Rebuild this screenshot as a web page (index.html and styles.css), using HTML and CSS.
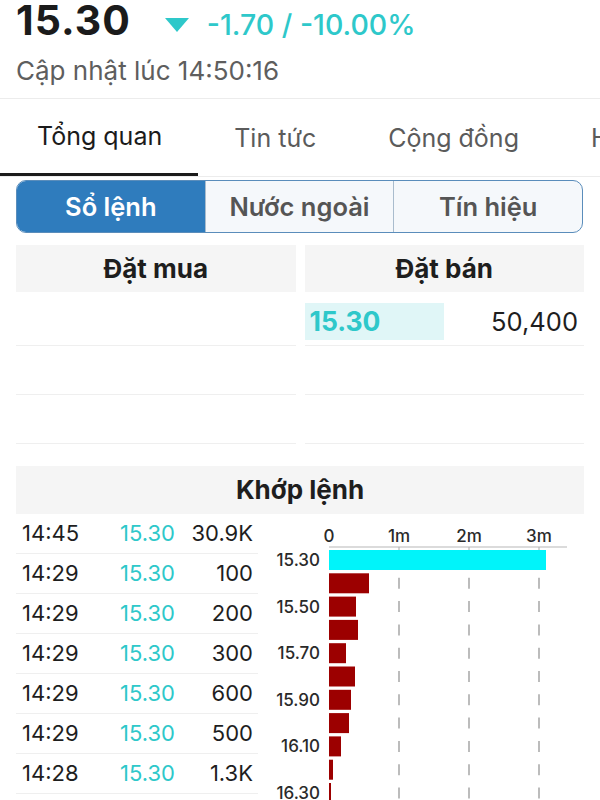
FILE: index.html
```html
<!DOCTYPE html>
<html lang="vi">
<head>
  <meta charset="UTF-8" />
  <title>Sổ lệnh</title>
  <link rel="stylesheet" href="styles.css">
</head>
<body>
  <div class="quote">
    <div class="quote-top">
      <span class="price">15.30</span>
      <span class="arrow"></span>
      <span class="change">-1.70 / -10.00%</span>
    </div>
    <div class="updated">Cập nhật lúc 14:50:16</div>
  </div>

  <nav class="tabs">
    <a class="tab active">Tổng quan</a>
    <a class="tab">Tin tức</a>
    <a class="tab">Cộng đồng</a>
    <a class="tab">Hồ sơ</a>
  </nav>

  <div class="segments">
    <div class="seg active">Sổ lệnh</div>
    <div class="seg">Nước ngoài</div>
    <div class="seg">Tín hiệu</div>
  </div>

  <div class="book">
    <div class="book-col">
      <div class="book-head">Đặt mua</div>
      <div class="book-row"></div>
      <div class="book-row"></div>
      <div class="book-row"></div>
    </div>
    <div class="book-col">
      <div class="book-head">Đặt bán</div>
      <div class="book-row">
        <span class="book-price">15.30</span>
        <span class="book-vol">50,400</span>
      </div>
      <div class="book-row"></div>
      <div class="book-row"></div>
    </div>
  </div>

  <div class="match">
    <div class="match-head">Khớp lệnh</div>
    <div class="match-body">
      <div class="trades">
        <div class="trade"><span>14:45</span><span class="t-price">15.30</span><span class="t-vol">30.9K</span></div>
        <div class="trade"><span>14:29</span><span class="t-price">15.30</span><span class="t-vol">100</span></div>
        <div class="trade"><span>14:29</span><span class="t-price">15.30</span><span class="t-vol">200</span></div>
        <div class="trade"><span>14:29</span><span class="t-price">15.30</span><span class="t-vol">300</span></div>
        <div class="trade"><span>14:29</span><span class="t-price">15.30</span><span class="t-vol">600</span></div>
        <div class="trade"><span>14:29</span><span class="t-price">15.30</span><span class="t-vol">500</span></div>
        <div class="trade"><span>14:28</span><span class="t-price">15.30</span><span class="t-vol">1.3K</span></div>
      </div>
      <svg class="chart" width="340" height="286" viewBox="0 0 340 286">
        <g class="axis-labels">
          <text x="69" y="28">0</text>
          <text x="139" y="28">1m</text>
          <text x="209" y="28">2m</text>
          <text x="279" y="28">3m</text>
        </g>
        <line x1="69" y1="33" x2="307" y2="33" stroke="#b8b8b8" stroke-width="1.2"/>
        <g stroke="#b8b8b8" stroke-width="1.2">
          <line x1="139" y1="33" x2="139" y2="37"/>
          <line x1="209" y1="33" x2="209" y2="37"/>
          <line x1="279" y1="33" x2="279" y2="37"/>
        </g>
        <g stroke="#999" stroke-width="1.3" stroke-dasharray="11 12.3">
          <line x1="139" y1="63.8" x2="139" y2="286"/>
          <line x1="209" y1="63.8" x2="209" y2="286"/>
          <line x1="279" y1="63.8" x2="279" y2="286"/>
        </g>
        <rect x="69" y="36" width="217" height="20" fill="#00f4fa"/>
        <g fill="#9c0000">
          <rect x="69" y="59.3" width="40" height="20"/>
          <rect x="69" y="82.6" width="27" height="20"/>
          <rect x="69" y="105.9" width="29" height="20"/>
          <rect x="69" y="129.2" width="17" height="20"/>
          <rect x="69" y="152.5" width="26" height="20"/>
          <rect x="69" y="175.8" width="22" height="20"/>
          <rect x="69" y="199.1" width="20" height="20"/>
          <rect x="69" y="222.4" width="12" height="20"/>
          <rect x="69" y="245.7" width="4" height="20"/>
          <rect x="69" y="269" width="2" height="20"/>
        </g>
        <g class="price-labels">
          <text x="60" y="46">15.30</text>
          <text x="60" y="92.6">15.50</text>
          <text x="60" y="139.2">15.70</text>
          <text x="60" y="185.8">15.90</text>
          <text x="60" y="232.4">16.10</text>
          <text x="60" y="278.5">16.30</text>
        </g>
      </svg>
    </div>
  </div>
</body>
</html>
```

FILE: styles.css
```css
body {
  margin: 0;
  font-family: Inter, "Noto Sans", sans-serif;
  background: #fff;
  color: #1e1e1e;
  overflow: hidden;
}

.quote {
  padding: 0 16px;
  height: 98px;
  border-bottom: 1px solid #ececec;
}
.quote-top {
  display: flex;
  align-items: baseline;
}
.price {
  font-size: 41px;
  line-height: 40px;
  font-weight: 700;
  color: #1b1b1b;
  letter-spacing: 1px;
}
.arrow {
  width: 0;
  height: 0;
  margin: 0 18px 0 34px;
  border-left: 12px solid transparent;
  border-right: 12px solid transparent;
  border-top: 14px solid #2ec8ca;
  align-self: center;
  position: relative;
  top: 4px;
}
.change {
  font-size: 28.5px;
  font-weight: 500;
  color: #2ec8ca;
}
.updated {
  margin-top: 13px;
  font-size: 26px;
  color: #5e5e5e;
}

.tabs {
  display: flex;
  height: 77px;
  border-bottom: 1px solid #ececec;
  overflow: hidden;
  white-space: nowrap;
}
.tab {
  flex: none;
  padding: 0 36px;
  font-size: 25px;
  line-height: 78px;
  color: #5b5b5b;
}
.tab.active {
  color: #1b1b1b;
  border-bottom: 3px solid #1b1b1b;
  line-height: 75px;
  padding-left: 37px;
}

.segments {
  display: flex;
  margin: 3px 17px 0 16px;
  height: 51px;
  border: 1.5px solid #5a8dbb;
  border-radius: 10px;
  overflow: hidden;
  background: #f5f8fb;
}
.seg {
  flex: 1;
  display: flex;
  align-items: center;
  justify-content: center;
  font-size: 25.5px;
  font-weight: 600;
  color: #555;
  border-left: 1.5px solid #a9bccd;
}
.seg:first-child {
  border-left: none;
}
.seg.active {
  background: #2f7cbd;
  color: #fff;
}

.book {
  display: grid;
  grid-template-columns: 1fr 1fr;
  gap: 9px;
  margin: 12px 16px 0;
}
.book-head {
  height: 47px;
  line-height: 47px;
  background: #f5f5f5;
  text-align: center;
  font-size: 26px;
  font-weight: 700;
  color: #1e1e1e;
}
.book-row {
  display: flex;
  align-items: center;
  height: 48px;
  border-bottom: 1px solid #efefef;
}
.book-row:nth-child(2) {
  height: 53px;
}
.book-price {
  width: 134px;
  height: 37px;
  line-height: 37px;
  padding-left: 5px;
  margin-top: 6px;
  background: #e0f6f7;
  font-size: 26.5px;
  font-weight: 700;
  color: #2ec8ca;
}
.book-vol {
  flex: 1;
  text-align: right;
  padding-right: 6px;
  margin-top: 6px;
  font-size: 25.5px;
  color: #1e1e1e;
}

.match {
  margin: 22px 16px 0;
}
.match-head {
  height: 48px;
  line-height: 48px;
  background: #f5f5f5;
  text-align: center;
  font-size: 26px;
  font-weight: 700;
}
.match-body {
  display: flex;
}
.trades {
  width: 242px;
  flex: none;
}
.trade {
  display: grid;
  grid-template-columns: 98px 1fr auto;
  height: 39px;
  line-height: 39px;
  padding: 0 5px 0 6px;
  border-bottom: 1px solid #efefef;
  font-size: 22px;
  color: #1e1e1e;
}
.t-price {
  color: #2ec8ca;
}
.t-vol {
  text-align: right;
}
.chart {
  display: block;
  margin-left: 2px;
  flex: none;
}
.chart text {
  font-family: Inter, sans-serif;
  font-size: 17px;
  font-weight: 500;
  fill: #2a2a2a;
}
.axis-labels text {
  text-anchor: middle;
}
.price-labels text {
  text-anchor: end;
  dominant-baseline: central;
}
```
